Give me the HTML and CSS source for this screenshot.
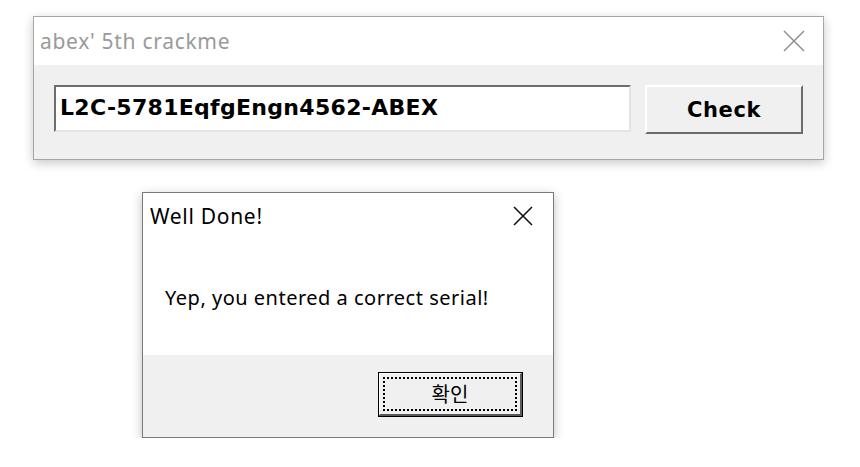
FILE: index.html
```html
<!DOCTYPE html>
<html lang="ko">
<head>
  <meta charset="UTF-8">
  <title>abex' 5th crackme</title>
  <link rel="stylesheet" href="styles.css">
</head>
<body>
  <div class="desktop">
    <!-- Main crackme window -->
    <div class="window main-window">
      <div class="titlebar">
        <span class="title inactive">abex' 5th crackme</span>
        <svg class="close" width="22" height="22" viewBox="0 0 22 22">
          <path d="M1 1 L21 21 M21 1 L1 21" stroke="#8a8a8a" stroke-width="1.4" fill="none"/>
        </svg>
      </div>
      <div class="client">
        <div class="serial-box">L2C-5781EqfgEngn4562-ABEX</div>
        <button class="btn check-btn">Check</button>
      </div>
    </div>

    <!-- Message box -->
    <div class="window msgbox">
      <div class="titlebar msg-titlebar">
        <span class="title">Well Done!</span>
        <svg class="close" width="20" height="20" viewBox="0 0 20 20">
          <path d="M1 1 L19 19 M19 1 L1 19" stroke="#111" stroke-width="1.6" fill="none"/>
        </svg>
      </div>
      <div class="msg-body">
        <p class="msg-text">Yep, you entered a correct serial!</p>
      </div>
      <div class="msg-footer">
        <button class="btn ok-btn"><span class="focus">확인</span></button>
      </div>
    </div>
  </div>
</body>
</html>
```

FILE: styles.css
```css
/* Windows-style dialogs */
body {
  margin: 0;
  background: #fff;
  font-family: "Noto Sans", "Noto Sans CJK KR", sans-serif;
}
.desktop {
  padding: 16px 0 0 33px;
}
.window {
  box-sizing: border-box;
  background: #fff;
}
.main-window {
  width: 791px;
  height: 144px;
  border: 1px solid #a6a6a6;
  box-shadow: 0 3px 10px rgba(0, 0, 0, 0.22);
}
.titlebar {
  height: 48px;
  display: flex;
  align-items: center;
  justify-content: space-between;
  padding: 0 18px 0 6px;
  background: #fff;
}
.title {
  font-size: 21px;
  letter-spacing: 0.7px;
  color: #000;
}
.title.inactive {
  color: #9a9a9a;
}
.client {
  height: 94px;
  background: #f0f0f0;
  display: flex;
  align-items: flex-start;
  padding: 20px 0 0 20px;
  box-sizing: border-box;
}
.serial-box {
  box-sizing: border-box;
  width: 577px;
  height: 47px;
  background: #fff;
  border-top: 2px solid #6d6d6d;
  border-left: 2px solid #6d6d6d;
  border-right: 2px solid #e3e3e3;
  border-bottom: 2px solid #e3e3e3;
  font-family: "DejaVu Sans", sans-serif;
  font-weight: bold;
  font-size: 22px;
  letter-spacing: 0.3px;
  padding: 8px 0 0 4px;
  color: #000;
}
.btn {
  box-sizing: border-box;
  background: #f0f0f0;
  border-top: 2px solid #fff;
  border-left: 2px solid #fff;
  border-right: 2px solid #6d6d6d;
  border-bottom: 2px solid #6d6d6d;
  padding: 0;
  color: #000;
}
.check-btn {
  margin-left: 14px;
  width: 158px;
  height: 49px;
  font-family: "DejaVu Sans", sans-serif;
  font-weight: bold;
  font-size: 21px;
  letter-spacing: 0.6px;
}
.msgbox {
  margin: 32px 0 0 109px;
  width: 412px;
  height: 246px;
  border: 1px solid #7a7a7a;
  box-shadow: 0 3px 10px rgba(0, 0, 0, 0.25);
}
.msg-titlebar {
  height: 46px;
  padding: 0 20px 0 7px;
}
.msg-body {
  height: 116px;
  display: flex;
  align-items: center;
  padding: 0 0 0 22px;
}
.msg-text {
  margin: 0;
  font-size: 20px;
  letter-spacing: 0.5px;
  color: #000;
}
.msg-footer {
  height: 82px;
  background: #f0f0f0;
  padding: 17px 0 0 235px;
  box-sizing: border-box;
}
.ok-btn {
  width: 145px;
  height: 45px;
  outline: 1px solid #000;
  outline-offset: -1px;
  border-top: 2px solid #fff;
  border-left: 2px solid #fff;
  border-right: 3px solid #5a5a5a;
  border-bottom: 3px solid #5a5a5a;
  padding: 3px;
  font-family: "Noto Sans CJK KR", sans-serif;
  font-size: 20px;
}
.focus {
  display: flex;
  align-items: center;
  justify-content: center;
  height: 100%;
  border: 2px dotted #000;
  box-sizing: border-box;
  line-height: 1;
}
```
